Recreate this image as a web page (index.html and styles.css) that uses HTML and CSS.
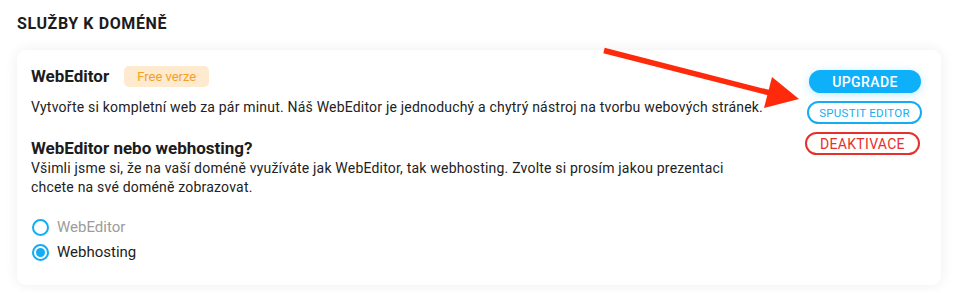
FILE: index.html
```html
<!DOCTYPE html>
<html lang="cs">
  <head>
    <meta charset="UTF-8" />
    <title>Služby k doméně</title>
    <meta name="viewport" content="width=device-width, initial-scale=1.0" />
    <link rel="stylesheet" href="styles.css">
  </head>
  <body>
    <div class="page">
      <h2 class="section-title">Služby k doméně</h2>

      <div class="card">
        <div class="card-main">
          <div class="service-head">
            <h3>WebEditor</h3>
            <span class="badge">Free verze</span>
          </div>
          <p class="desc">
            Vytvořte si kompletní web za pár minut. Náš WebEditor je jednoduchý a chytrý nástroj na tvorbu webových stránek.
          </p>

          <h4>WebEditor nebo webhosting?</h4>
          <p class="desc narrow">
            Všimli jsme si, že na vaší doméně využíváte jak WebEditor, tak webhosting. Zvolte si prosím jakou prezentaci chcete na své doméně zobrazovat.
          </p>

          <div class="choices">
            <label class="choice">
              <input type="radio" name="presentation" value="webeditor" />
              <span class="dot"></span>
              <span class="choice-label muted">WebEditor</span>
            </label>
            <label class="choice">
              <input type="radio" name="presentation" value="webhosting" checked />
              <span class="dot"></span>
              <span class="choice-label">Webhosting</span>
            </label>
          </div>
        </div>

        <div class="card-actions">
          <button class="btn btn-upgrade">Upgrade</button>
          <button class="btn btn-outline">Spustit editor</button>
          <button class="btn btn-danger">Deaktivace</button>
        </div>
      </div>

      <!-- annotation arrow -->
      <svg class="arrow" width="220" height="80" viewBox="0 0 220 80">
        <line x1="12" y1="14.5" x2="178" y2="57" stroke="#ff2a0c" stroke-width="5.5" />
        <polygon points="180,41 207,63 172,72" fill="#ff2a0c" />
      </svg>
    </div>
  </body>
</html>
```

FILE: styles.css
```css
body {
  margin: 0;
  font-family: Roboto, 'Liberation Sans', sans-serif;
  background: #ffffff;
  color: #222;
}

.page {
  position: relative;
  padding: 14px 19px 7px 17px;
}

.section-title {
  margin: 0 0 16px;
  font-size: 16px;
  line-height: 20px;
  font-weight: 700;
  text-transform: uppercase;
  letter-spacing: 0.6px;
  color: #1c1c1c;
}

.card {
  display: flex;
  justify-content: space-between;
  align-items: flex-start;
  background: #fff;
  border-radius: 9px;
  box-shadow: 0 0 14px rgba(0, 0, 0, 0.07);
  padding: 15px 20px 22px 14px;
  height: 198px;
}

.card-main {
  width: 760px;
}

.service-head {
  display: flex;
  align-items: center;
  gap: 15px;
  height: 22px;
}

h3 {
  margin: 0;
  font-size: 17px;
  line-height: 22px;
  font-weight: 700;
  color: #1c1c1c;
}

.badge {
  display: inline-block;
  background: #fdeacf;
  color: #f5a11f;
  font-size: 13px;
  line-height: 21px;
  padding: 0 13px;
  border-radius: 5px;
}

.desc {
  margin: 0;
  font-size: 14px;
  line-height: 19px;
  color: #222;
  letter-spacing: 0.2px;
}

.service-head + .desc {
  margin-top: 11px;
}

.narrow {
  max-width: 735px;
}

h4 {
  margin: 21px 0 0;
  font-size: 17px;
  line-height: 21px;
  font-weight: 700;
  color: #1c1c1c;
}

.choices {
  margin-top: 21px;
  display: flex;
  flex-direction: column;
  gap: 6px;
}

.choice {
  display: flex;
  align-items: center;
  gap: 8px;
  cursor: pointer;
}

.choice input {
  display: none;
}

.dot {
  width: 13px;
  height: 13px;
  border: 2px solid #14adf4;
  border-radius: 50%;
  margin-left: 1px;
  box-sizing: content-box;
  display: flex;
  align-items: center;
  justify-content: center;
}

.choice input:checked + .dot::after {
  content: '';
  width: 9px;
  height: 9px;
  border-radius: 50%;
  background: #14adf4;
}

.choice-label {
  font-size: 15px;
  line-height: 19px;
  color: #1c1c1c;
}

.choice-label.muted {
  color: #9c9c9c;
}

.card-actions {
  display: flex;
  flex-direction: column;
  align-items: flex-end;
  gap: 8px;
  padding-top: 5px;
}

.btn {
  font-family: Roboto, 'Liberation Sans', sans-serif;
  text-transform: uppercase;
  border-radius: 12px;
  height: 23px;
  padding: 0;
  cursor: pointer;
  background: #fff;
}

.btn-upgrade {
  width: 112px;
  border: none;
  background: #0fb0fa;
  color: #fff;
  font-size: 14px;
  font-weight: 500;
  letter-spacing: 0.4px;
  box-shadow: 0 2px 10px rgba(15, 176, 250, 0.25);
}

.btn-outline {
  width: 115px;
  margin-right: -1px;
  border: 2px solid #14adf4;
  color: #14adf4;
  font-size: 11.5px;
  letter-spacing: 0.3px;
}

.btn-danger {
  width: 115px;
  margin-right: 1px;
  border: 2px solid #e6302b;
  color: #e6302b;
  font-size: 14px;
  letter-spacing: 0.3px;
}

.arrow {
  position: absolute;
  left: 592px;
  top: 36px;
}
```
